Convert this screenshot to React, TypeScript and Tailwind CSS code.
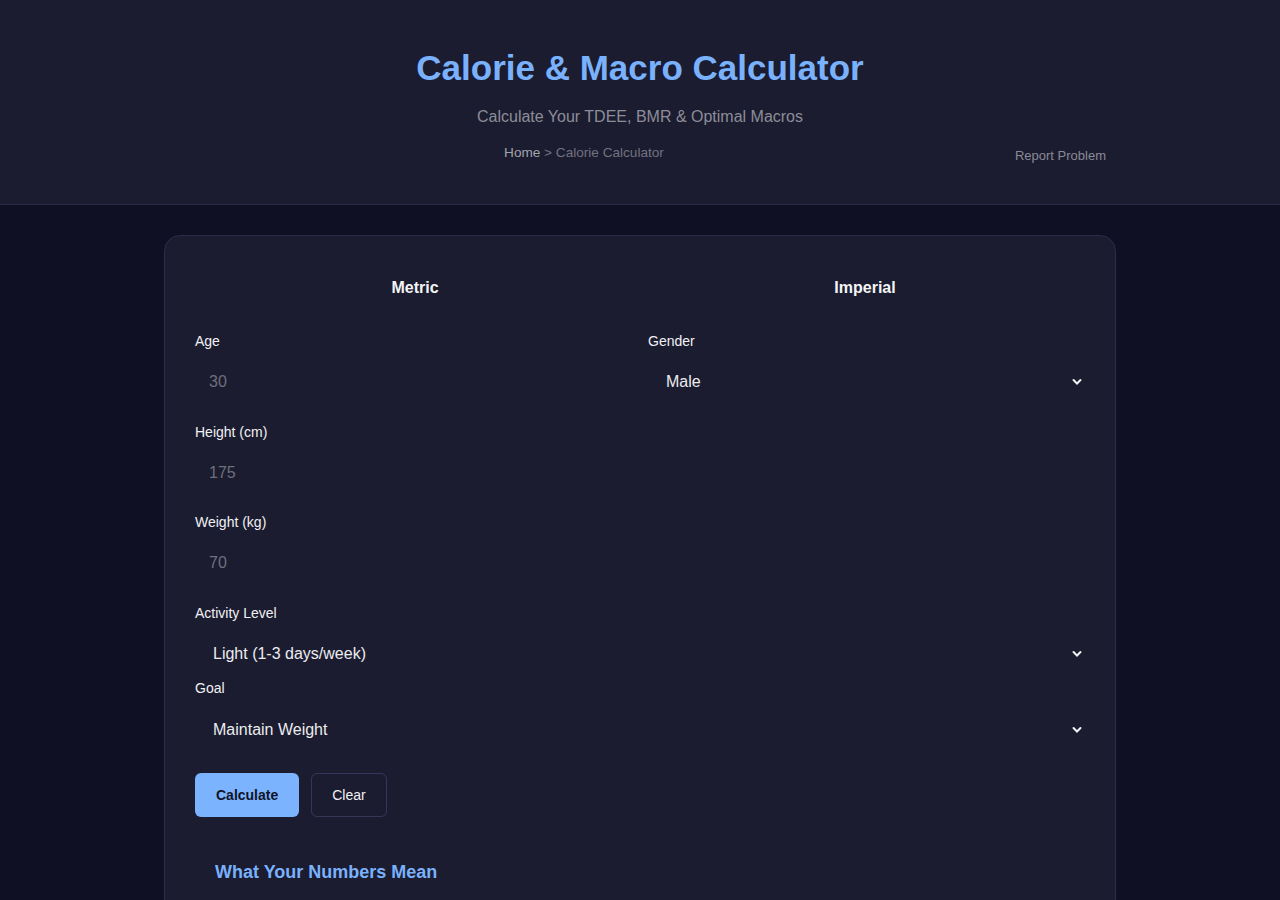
import React from "react";

const Chevron = () => (
  <svg
    className="pointer-events-none absolute right-[3px] top-1/2 -translate-y-1/2"
    width="10"
    height="7"
    viewBox="0 0 10 7"
    fill="none"
  >
    <path d="M1.5 1.5 5 5l3.5-3.5" stroke="#f2f2f2" strokeWidth="2" strokeLinecap="round" />
  </svg>
);

const Field = ({ label, placeholder, className = "mb-[18px]" }: { label: string; placeholder: string; className?: string }) => (
  <div className={className}>
    <label className="block text-sm leading-5 text-[#f1f1f4] mb-[9px]">{label}</label>
    <input
      placeholder={placeholder}
      className="block w-full h-[44px] bg-transparent px-[14px] text-base text-[#e6e6ea] placeholder:text-[#6f6f7c] outline-none"
    />
  </div>
);

const Select = ({
  label,
  value,
  className,
  gap = "mb-[9px]",
}: {
  label: string;
  value: string;
  className?: string;
  gap?: string;
}) => (
  <div className={className}>
    <label className={`block text-sm leading-5 text-[#f1f1f4] ${gap}`}>{label}</label>
    <div className="relative">
      <select
        defaultValue={value}
        className="block w-full h-[44px] appearance-none bg-transparent pl-[18px] pr-8 text-base text-[#ececf0] outline-none"
      >
        <option>{value}</option>
      </select>
      <Chevron />
    </div>
  </div>
);

export default function App() {
  return (
    <div className="min-h-screen bg-[#0f1024] font-['Liberation_Sans',Arial,sans-serif]">
      <header className="bg-[#1b1c2f] border-b border-[#2b2b4c] pt-[46px] pb-[41px] text-center">
        <h1 className="text-[35px] leading-[44px] font-bold text-[#7ab1fd]">Calorie &amp; Macro Calculator</h1>
        <p className="mt-[17px] text-base leading-5 text-[#8d8d99]">Calculate Your TDEE, BMR &amp; Optimal Macros</p>
        <div className="w-[932px] mx-auto mt-[16px] flex items-end gap-[21px]">
          <nav className="flex-1 text-[13.6px] leading-5 text-[#727280]">
            <span className="text-[#a3a3ae]">Home</span> &gt; Calorie Calculator
          </nav>
          <span className="text-[13px] leading-5 text-[#8a8a96] translate-y-[3px]">Report Problem</span>
        </div>
      </header>

      <main className="pt-[30px]">
        <div className="w-[952px] mx-auto rounded-[16px] border border-[#2b2c4a] bg-[#1b1c2f] px-[30px] pt-[30px] pb-[40px]">
          <div className="grid grid-cols-2 gap-x-[10px] mb-[21px]">
            <button className="h-[44px] text-base font-bold text-[#f4f4f6]">Metric</button>
            <button className="h-[44px] text-base font-bold text-[#f4f4f6]">Imperial</button>
          </div>

          <div className="grid grid-cols-2 gap-x-[16px]">
            <div>
              <Field label="Age" placeholder="30" />
              <Field label="Height (cm)" placeholder="175" className="mb-[17px]" />
              <Field label="Weight (kg)" placeholder="70" />
            </div>
            <div>
              <Select label="Gender" value="Male" />
            </div>
          </div>

          <Select label="Activity Level" value="Light (1-3 days/week)" className="mb-[2px]" />
          <Select label="Goal" value="Maintain Weight" gap="mb-[10px]" />

          <div className="flex gap-[12px] mt-[21px]">
            <button className="h-[44px] px-[21px] rounded-[6px] bg-[#7cb3ff] text-sm font-bold text-[#111427]">Calculate</button>
            <button className="h-[44px] px-[20px] rounded-[6px] border border-[#35365a] text-sm text-[#f1f1f4]">Clear</button>
          </div>

          <h2 className="mt-[43px] px-[20px] text-lg leading-6 font-bold text-[#7ab1fd]">What Your Numbers Mean</h2>
          <div className="h-[200px]" />
        </div>
      </main>
    </div>
  );
}
